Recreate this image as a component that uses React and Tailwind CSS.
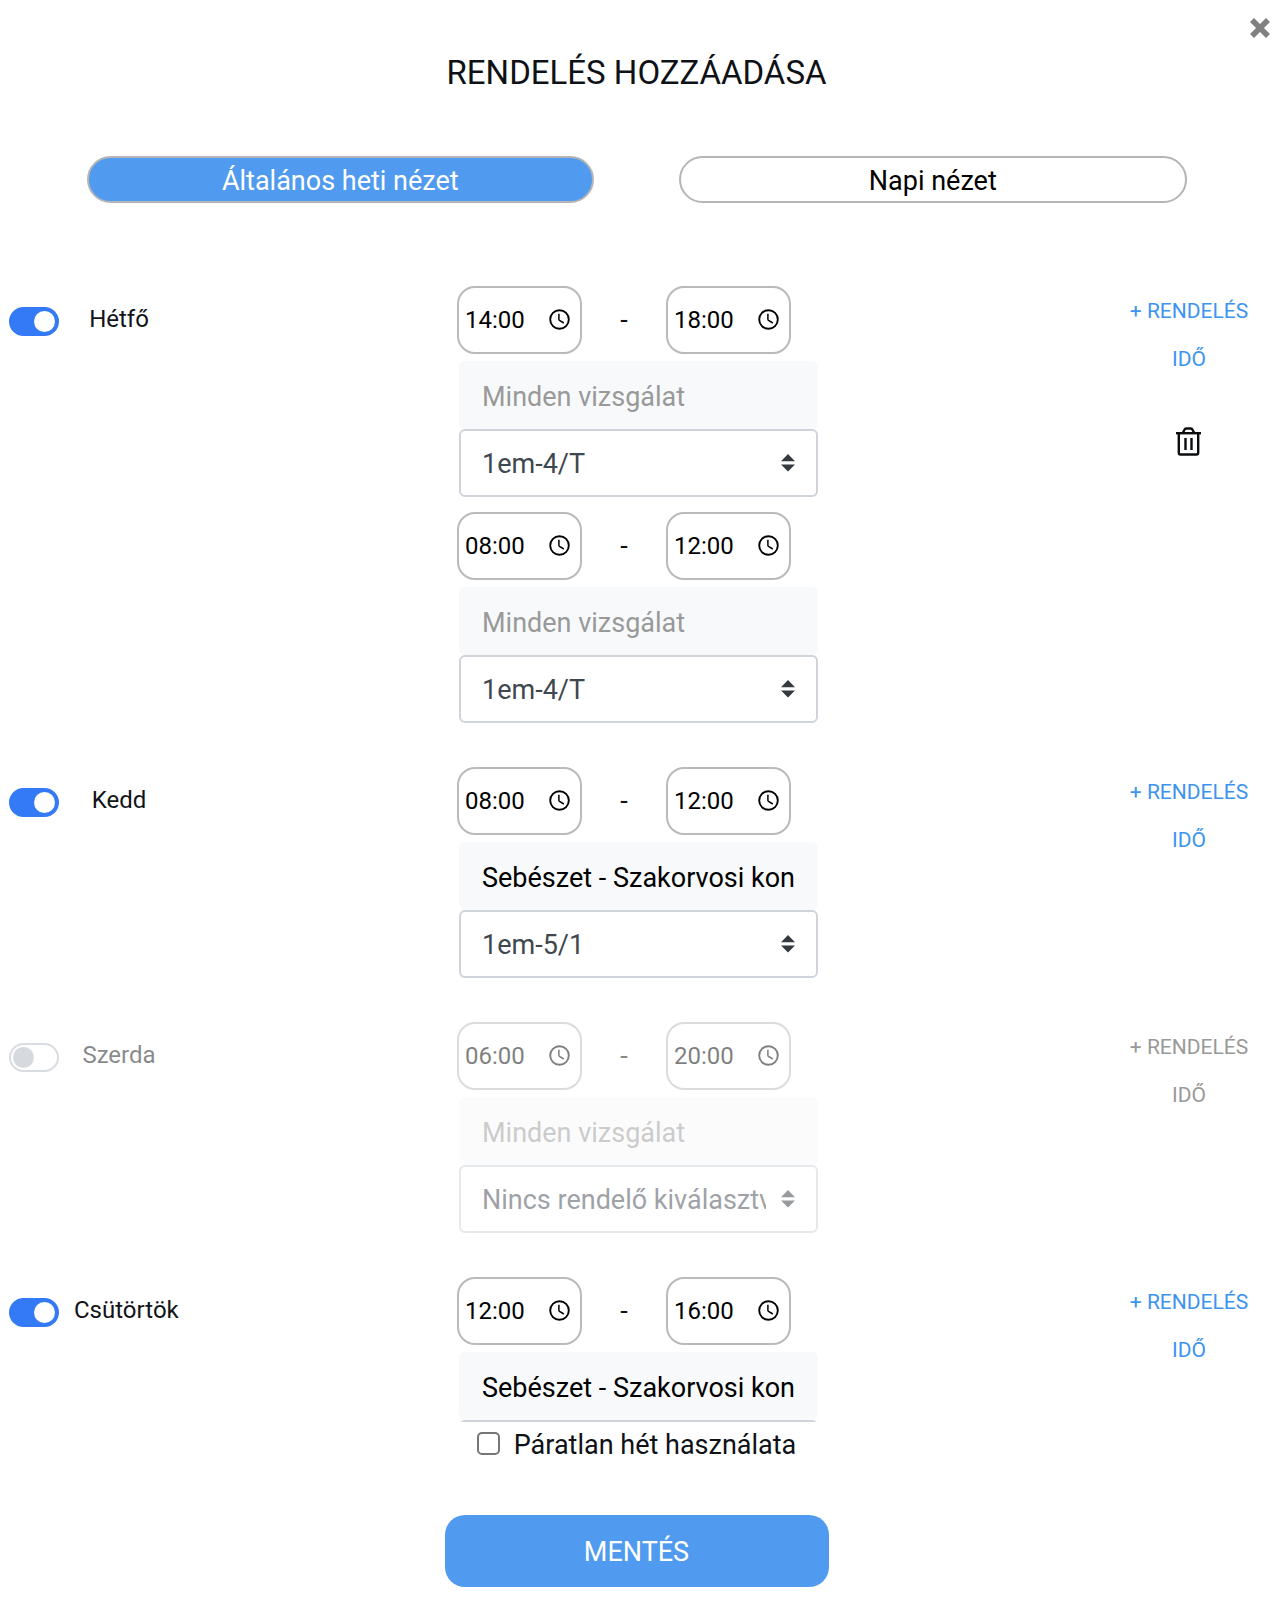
import React from "react";

const days = [
    {
        id: "hetfo",
        name: "Hétfő",
        enabled: true,
        slots: [
            { from: "14:00", to: "18:00", exam: "", room: "1em-4/T" },
            { from: "08:00", to: "12:00", exam: "", room: "1em-4/T" },
        ],
    },
    {
        id: "kedd",
        name: "Kedd",
        enabled: true,
        slots: [{ from: "08:00", to: "12:00", exam: "Sebészet - Szakorvosi konzultáció", room: "1em-5/1" }],
    },
    {
        id: "szerda",
        name: "Szerda",
        enabled: false,
        slots: [{ from: "06:00", to: "20:00", exam: "", room: "Nincs rendelő kiválasztva" }],
    },
    {
        id: "csutortok",
        name: "Csütörtök",
        enabled: true,
        slots: [{ from: "12:00", to: "16:00", exam: "Sebészet - Szakorvosi konzultáció", room: "1em-5/1" }],
    },
];

const TimeField = ({ value, label, disabled }) => (
    <div className="flex h-[68px] w-[125px] items-center rounded-[18px] border-2 border-[#bababa] bg-white pr-[10px] pl-[6px]">
        <input
            type="text"
            defaultValue={value}
            aria-label={label}
            disabled={disabled}
            className="min-w-0 flex-1 bg-transparent text-2xl text-black outline-none"
        />
        <svg className="mb-[2px] h-[21px] w-[21px] shrink-0" viewBox="0 0 21 21" fill="none" stroke="#000" strokeWidth="1.9">
            <circle cx="10.5" cy="10.5" r="9.3" />
            <path d="M9.900 4.800v5.400q0 .7.6 1.100l4.300 2.700" strokeWidth="1.500" />
        </svg>
    </div>
);

const Slot = ({ slot, day, disabled }) => (
    <div className="mb-[15px]">
        <div className="mb-[7px] flex items-center">
            <TimeField value={slot.from} label={day + " kezdés"} disabled={disabled} />
            <span className="w-[84px] text-center text-[27px] text-[#111]">-</span>
            <TimeField value={slot.to} label={day + " vége"} disabled={disabled} />
        </div>
        <div className="ml-[2px]">
            <input
                type="text"
                defaultValue={slot.exam}
                placeholder="Minden vizsgálat"
                aria-label={day + " vizsgálat"}
                disabled={disabled}
                className="block h-[68px] w-full rounded-md bg-[#f8f9fb] px-[23px] pt-[3px] text-[27px] text-black outline-none placeholder:text-[#999]"
            />
            <div className="relative">
                <select
                    aria-label={day + " rendelő"}
                    disabled={disabled}
                    className="block h-[68px] w-full appearance-none rounded-md border-2 border-[#ced4da] bg-white pt-[3px] pr-[50px] pl-[21px] text-[27px] text-[#3f474f] opacity-100 outline-none"
                >
                    <option>{slot.room}</option>
                </select>
                <svg
                    className="pointer-events-none absolute top-[25px] right-[23px] h-[18px] w-[14px]"
                    viewBox="0 0 14 18"
                    fill="#343a40"
                >
                    <path d="M0 7.2 7 0l7 7.2zM0 10.4h14L7 17.6z" />
                </svg>
            </div>
        </div>
    </div>
);

const DayRow = ({ day }) => (
    <section className="mb-[29px] grid grid-cols-[1fr_361px_1fr]">
        <div className="flex items-start">
            <input
                id={day.id}
                type="checkbox"
                role="switch"
                defaultChecked={day.enabled}
                className="mt-[21px] ml-[9px] h-[29px] w-[50px] shrink-0 appearance-none rounded-full border-2 border-[#d9dce1] bg-white before:mt-[2px] before:ml-[2px] before:block before:h-[21px] before:w-[21px] before:rounded-full before:bg-[#d6d9de] checked:border-[#347af6] checked:bg-[#347af6] checked:before:ml-[23px] checked:before:bg-white"
            />
            <label
                htmlFor={day.id}
                className={
                    "ml-[15px] mt-[15px] min-w-[90px] text-center text-2xl leading-9 whitespace-nowrap text-[#111418]" +
                    (day.enabled ? "" : " opacity-50")
                }
            >
                {day.name}
            </label>
        </div>

        <div className={day.enabled ? "" : "opacity-50"}>
            {day.slots.map((slot, i) => (
                <Slot key={i} slot={slot} day={day.name} disabled={!day.enabled} />
            ))}
        </div>

        <div className="flex flex-col items-end pr-[26px]">
            <button
                type="button"
                disabled={!day.enabled}
                className="mt-px w-[120px] text-[21px] leading-[48px] text-[#3d94f0] disabled:text-[#999]"
            >
                + RENDELÉS IDŐ
            </button>
            {day.slots.length > 1 && (
                <button type="button" aria-label="Törlés" className="mt-[44px] flex w-[120px] justify-center">
                    <svg className="h-[29px] w-[26px]" viewBox="0 0 26 29" fill="none" stroke="#0b0c0e" strokeWidth="2.4">
                        <path d="M0 6.200h25" />
                        <path d="M6.800 6 8.300 3Q9 1.500 10.200 1.500h4.600q1.200 0 1.900 1.500l1.500 3" />
                        <path d="M2.800 6v19.800q0 1.700 1.700 1.700h16q1.700 0 1.700-1.700V6" />
                        <path d="M9.500 11v12M15.500 11v12" />
                    </svg>
                </button>
            )}
        </div>
    </section>
);

const App = () => {
    return (
        <div className="flex h-screen flex-col bg-white pr-1 font-[Roboto,sans-serif]">
            <header className="shrink-0 pr-[2px]">
                <div className="flex justify-end pt-[18px] pr-[3px]">
                    <button type="button" aria-label="Bezárás">
                        <svg className="h-5 w-5" viewBox="0 0 20 20" stroke="#808080" strokeWidth="5.6">
                            <path d="M2 2l16 16M18 2 2 18" />
                        </svg>
                    </button>
                </div>
                <h1 className="mt-[10px] text-center text-[33px] leading-[50px] text-[#0e1116]">RENDELÉS HOZZÁADÁSA</h1>
                <div className="mx-auto mt-[58px] grid w-[1100px] max-w-full grid-cols-2 gap-[85px]">
                    <button
                        type="button"
                        className="h-[47px] rounded-full border-2 border-[#b5b5b5] bg-[#509bf0] pt-[3px] text-[27px] leading-none text-white"
                    >
                        Általános heti nézet
                    </button>
                    <button
                        type="button"
                        className="h-[47px] rounded-full border-2 border-[#b5b5b5] bg-white pt-[3px] text-[27px] leading-none text-black"
                    >
                        Napi nézet
                    </button>
                </div>
            </header>

            <main className="mt-[83px] min-h-0 flex-1 overflow-y-auto [scrollbar-width:none]">
                {days.map((day) => (
                    <DayRow key={day.id} day={day} />
                ))}
            </main>

            <footer className="flex shrink-0 flex-col items-center pr-[2px] pb-[13px]">
                <label className="flex h-[46px] items-center gap-[14px] text-[27px] text-[#0e1116]">
                    <input
                        type="checkbox"
                        className="mb-1 h-[23px] w-[23px] appearance-none rounded-[5px] border-2 border-[#767676] bg-white checked:bg-[#347af6]"
                    />
                    Páratlan hét használata
                </label>
                <button
                    type="button"
                    className="mt-[47px] h-[72px] w-[384px] rounded-[20px] bg-[#509bf0] pt-[3px] text-[27px] text-white"
                >
                    MENTÉS
                </button>
            </footer>
        </div>
    );
};

export default App;
